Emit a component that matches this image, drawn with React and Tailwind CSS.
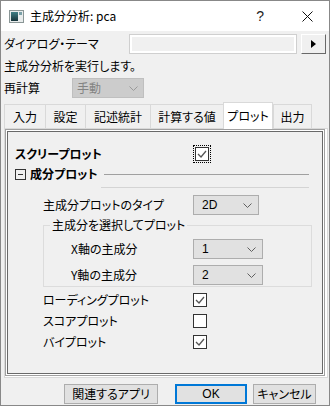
import React from 'react'

const jp = "font-['Noto_Sans_CJK_JP','Noto_Sans',sans-serif] [font-feature-settings:'palt']"

const Chevron = ({ color = '#606060' }) => (
  <svg width="9" height="5" viewBox="0 0 9 5">
    <path d="M0.5 0.5 L4.5 4.5 L8.5 0.5" fill="none" stroke={color} strokeWidth="1" />
  </svg>
)

const Combo = ({ value, w }) => (
  <div className={`${w} h-[20px] flex items-center justify-between pl-[8px] pr-[6px] bg-[#e1e1e1] border border-[#adadad]`}>
    <span className="text-[12px] font-['Liberation_Sans',sans-serif]">{value}</span>
    <Chevron />
  </div>
)

const Check = ({ on }) => (
  <div className="w-[14px] h-[14px] bg-white border border-[#333] flex items-center justify-center">
    {on && (
      <svg width="10" height="8" viewBox="0 0 10 8">
        <path d="M1 4 L4 7 L9 1" fill="none" stroke="#555" strokeWidth="1.3" />
      </svg>
    )}
  </div>
)

const tabs = [
  ['入力', 'w-[41px]'],
  ['設定', 'w-[40px]'],
  ['記述統計', 'w-[65px]'],
  ['計算する値', 'w-[73px]'],
  ['プロット', 'w-[50px]'],
  ['出力', 'w-[39px]'],
]

export default function App() {
  return (
    <div className={`w-[330px] h-[406px] border border-[#888] bg-[#f0f0f0] flex flex-col text-[12px] text-black ${jp}`}>
      {/* title bar */}
      <div className="h-[30px] bg-white flex items-center shrink-0">
        <svg className="ml-[8px]" width="15" height="13" viewBox="0 0 15 13">
          <rect x="0.5" y="0.5" width="14" height="12" fill="#e8ecec" stroke="#8a9696" />
          <defs>
            <linearGradient id="ic" x1="0" y1="0" x2="0" y2="1">
              <stop offset="0" stopColor="#3f7f86" />
              <stop offset="1" stopColor="#16343a" />
            </linearGradient>
          </defs>
          <rect x="2" y="2" width="7" height="9" fill="url(#ic)" />
          <rect x="10" y="2" width="3" height="3" fill="#7aa0a8" />
        </svg>
        <span className="ml-[6px] text-[12px]">主成分分析: pca</span>
        <span className="ml-auto text-[14px] font-['Liberation_Sans',sans-serif] text-[#222]">?</span>
        <svg className="ml-[38px] mr-[16px]" width="11" height="11" viewBox="0 0 11 11">
          <path d="M0.5 0.5 L10.5 10.5 M10.5 0.5 L0.5 10.5" stroke="#111" strokeWidth="1" />
        </svg>
      </div>

      {/* theme row */}
      <div className="mt-[3px] h-[20px] flex items-center">
        <span className="ml-[3px]">ダイアログ・テーマ</span>
        <div className="ml-auto w-[168px] h-[20px] border border-[#cfcfcf] bg-white p-[2px]">
          <div className="w-full h-full bg-[#f0f0f0]"></div>
        </div>
        <div className="ml-[4px] mr-[3px] w-[25px] h-[20px] bg-[#f0f0f0] border border-t-white border-l-white border-r-[#696969] border-b-[#696969] flex items-center justify-center">
          <svg width="5" height="8" viewBox="0 0 5 8"><path d="M0 0 L5 4 L0 8 Z" fill="#000" /></svg>
        </div>
      </div>

      <div className="mt-[4px] h-[16px] flex items-center ml-[3px]">主成分分析を実行します。</div>

      <div className="mt-[4px] h-[20px] flex items-center">
        <span className="ml-[3px] w-[68px]">再計算</span>
        <div className="w-[72px] h-[20px] bg-[#cccccc] border border-[#bfbfbf] flex items-center justify-between pl-[4px] pr-[5px]">
          <span className="text-[#838383]">手動</span>
          <Chevron color="#9a9a9a" />
        </div>
      </div>

      {/* tabs */}
      <div className="mt-[4px] h-[26px] flex items-end ml-[3px] relative z-10">
        {tabs.map(([t, w], i) =>
          i === 4 ? (
            <div key={t} className={`${w} h-[27px] -mb-[1px] bg-white border border-b-0 border-[#d9d9d9] flex items-center justify-center`}>
              {t}
            </div>
          ) : (
            <div key={t} className={`${w} h-[24px] bg-[#f0f0f0] border-t border-l ${i === 5 ? 'border-r' : ''} border-[#d9d9d9] flex items-center justify-center`}>
              {t}
            </div>
          )
        )}
      </div>

      {/* panel */}
      <div className="ml-[3px] mr-[1px] h-[250px] border border-[#d9d9d9] bg-white pt-0 pl-0 pr-[2px] pb-[1px] flex">
        <div className="flex-1 border border-[#a0a0a0] p-[1px] bg-white flex">
          <div className="flex-1 border border-[#696969] bg-[#f0f0f0] flex flex-col">
            <div className="mt-[13px] h-[18px] flex items-center">
              <span className="ml-[7px] w-[178px] font-bold">スクリープロット</span>
              <div className="border border-dotted border-black p-[1px]">
                <Check on />
              </div>
            </div>

            <div className="mt-[4px] h-[14px] flex items-center relative">
              <div className="ml-[7px] w-[11px] h-[11px] border border-[#333] flex items-center justify-center">
                <div className="w-[5px] h-[1px] bg-[#333]"></div>
              </div>
              <span className="ml-[4px] font-bold">成分プロット</span>
              <div className="ml-[6px] flex-1 mr-[13px] h-[1px] bg-[#a0a0a0]"></div>
            </div>
            <div className="mt-[6px] ml-[93px] mr-[13px] h-[1px] bg-[#d4d4d4]"></div>

            <div className="mt-[7px] h-[20px] flex items-center">
              <span className="ml-[35px] w-[150px]">主成分プロットのタイプ</span>
              <Combo value="2D" w="w-[66px]" />
            </div>

            <div className="mt-[10px] ml-[35px] mr-[10px] h-[62px] border border-[#dcdcdc] relative">
              <span className="absolute -top-[9px] left-[6px] px-[2px] bg-[#f0f0f0] leading-[16px]">主成分を選択してプロット</span>
              <div className="mt-[13px] h-[20px] flex items-center">
                <span className="ml-[27px] w-[122px]">X軸の主成分</span>
                <Combo value="1" w="w-[70px]" />
              </div>
              <div className="mt-[6px] h-[20px] flex items-center">
                <span className="ml-[27px] w-[122px]">Y軸の主成分</span>
                <Combo value="2" w="w-[70px]" />
              </div>
            </div>

            {[['ローディングプロット', true], ['スコアプロット', false], ['バイプロット', true]].map(([t, on], i) => (
              <div key={t} className={`${i === 0 ? 'mt-[6px]' : 'mt-[7px]'} h-[14px] flex items-center`}>
                <span className="ml-[35px] w-[150px]">{t}</span>
                <Check on={on} />
              </div>
            ))}
          </div>
        </div>
      </div>

      {/* buttons */}
      <div className="mt-[6px] h-[20px] flex items-center">
        <div className="ml-[63px] w-[94px] h-[20px] bg-[#e1e1e1] border border-[#adadad] flex items-center justify-center">関連するアプリ</div>
        <div className="ml-[17px] w-[72px] h-[20px] bg-[#e1e1e1] border-2 border-[#0078d7] flex items-center justify-center font-['Liberation_Sans',sans-serif]">OK</div>
        <div className="ml-[6px] w-[63px] h-[20px] bg-[#e1e1e1] border border-[#adadad] flex items-center justify-center">キャンセル</div>
      </div>
    </div>
  )
}
